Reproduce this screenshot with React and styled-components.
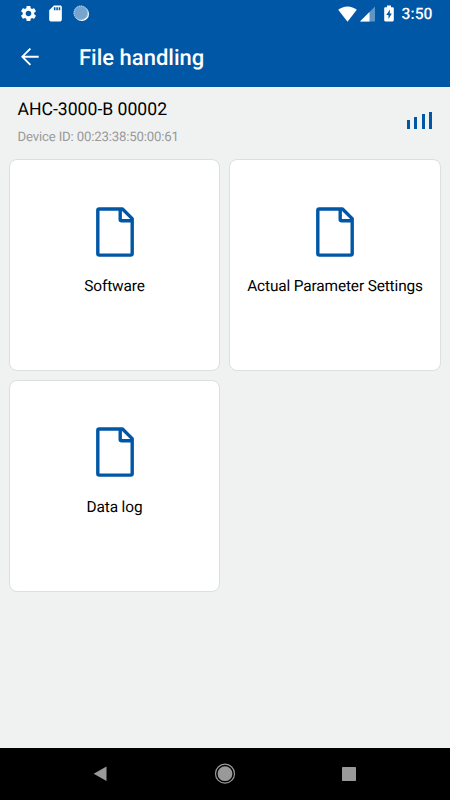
import styled, { createGlobalStyle } from "styled-components";
import { MdSettings, MdSdCard } from "react-icons/md";

const BLUE = "#0057a6";

const GlobalStyle = createGlobalStyle`
  * {
    box-sizing: border-box;
  }
  body {
    margin: 0;
    font-family: Roboto, "Liberation Sans", sans-serif;
    text-rendering: geometricPrecision;
  }
`;

const Screen = styled.div`
  width: 450px;
  height: 800px;
  display: flex;
  flex-direction: column;
  background-color: #f0f2f2;
  overflow: hidden;
`;

const StatusBar = styled.div`
  height: 27px;
  display: flex;
  justify-content: space-between;
  padding: 0 17.5px 0 19px;
  background-color: ${BLUE};
  color: white;
`;

const StatusGroup = styled.div`
  display: flex;
  align-items: center;
  gap: ${(props) => props.$gap}px;

  svg {
    display: block;
  }
`;

const Battery = styled.span`
  margin: 0 8px 0 9px;
`;

const Clock = styled.span`
  font-size: 15.7px;
  font-weight: 500;
  line-height: 28px;
`;

const AppBar = styled.header`
  height: 60px;
  display: flex;
  align-items: center;
  padding-left: 21px;
  background-color: ${BLUE};
  color: white;
`;

const BackButton = styled.button`
  display: flex;
  width: 18px;
  padding: 0;
  border: none;
  background: none;
  color: inherit;
  cursor: pointer;
`;

const Title = styled.h1`
  margin: 0 0 0 40px;
  padding-top: 4px;
  font-size: 22px;
  font-weight: 500;
  line-height: 26px;
  white-space: nowrap;
`;

const Device = styled.section`
  height: 72px;
  display: flex;
  justify-content: space-between;
  padding: 12px 18px 0 17.5px;
`;

const DeviceName = styled.div`
  font-size: 17.6px;
  line-height: 22px;
  color: #000;
`;

const DeviceId = styled.div`
  margin-top: 7.5px;
  font-size: 13.2px;
  line-height: 18px;
  letter-spacing: -0.17px;
  color: #999;
`;

const Signal = styled.div`
  height: 18px;
  display: flex;
  align-items: flex-end;
  gap: 4.4px;
  margin-top: 12px;
`;

const Bar = styled.span`
  width: 3px;
  height: ${(props) => props.$height}px;
  background-color: ${BLUE};
`;

const Grid = styled.main`
  flex: 1;
  display: grid;
  grid-template-columns: 211px 212px;
  grid-auto-rows: 212px;
  gap: 8.5px 9px;
  padding: 0.4px 9px;
`;

const Card = styled.div`
  display: flex;
  flex-direction: column;
  align-items: center;
  padding-top: 46.5px;
  border: 1px solid #dcdfdf;
  border-radius: 8px;
  background-color: white;

  svg {
    display: block;
  }
`;

const CardLabel = styled.span`
  margin-top: 19.5px;
  font-size: 15.4px;
  line-height: 20px;
  letter-spacing: -0.13px;
  color: #000;
  white-space: nowrap;
`;

const NavBar = styled.nav`
  height: 52px;
  display: flex;
  align-items: center;
  justify-content: space-between;
  padding: 0 94px 0 93px;
  background-color: black;
`;

const SyncIcon = () => (
  <svg width="17" height="17" viewBox="0 0 17 17">
    <circle cx="8.8" cy="8.9" r="7.2" fill="#fff" />
    <circle cx="7.8" cy="7.9" r="7.3" fill="#75a4cf" />
    <circle cx="7.8" cy="7.9" r="6.8" fill="none" stroke="#c5daed" strokeWidth="1" strokeDasharray="1 1" />
  </svg>
);

const WifiIcon = () => (
  <svg width="19" height="16" viewBox="0 0 19 16">
    <path d="M9.5 15.7 0.2 3.8C2.8 1.7 6 .4 9.5 .4s6.700 1.300 9.300 3.400z" fill="#fff" />
  </svg>
);

const CellIcon = () => (
  <svg width="15" height="16" viewBox="0 0 15 16">
    <path d="M0 15.500 15 .5v15z" fill="#5e96c8" />
    <path d="M0 15.500 9.500 6v9.500z" fill="#fff" />
  </svg>
);

const BatteryIcon = () => (
  <svg width="10" height="17" viewBox="0 0 10 17">
    <path
      d="M3 .5h4v1.700h1.700q1.100 0 1.100 1.100v12q0 1.100-1.100 1.100H1.300q-1.100 0-1.100-1.100v-12q0-1.100 1.100-1.100H3z"
      fill="#fff"
    />
    <path d="M6 4.500 2.300 10h2.200v4L7.800 8.500H5.700z" fill={BLUE} />
  </svg>
);

const BackIcon = () => (
  <svg width="18" height="18" viewBox="0 0 18 18">
    <path d="M17.700 8.700H1.500M9.400 .6 1.300 8.700l8.100 8.100" fill="none" stroke="#fff" strokeWidth="1.900" />
  </svg>
);

const FileIcon = () => (
  <svg width="38" height="50" viewBox="0 0 38 50" fill="none" stroke={BLUE} strokeWidth="3.400" strokeLinejoin="round">
    <path d="M3.200 2H26.500L36.200 11.600V46.600Q36.200 48.100 34.700 48.100H3.300Q1.800 48.100 1.800 46.600V3.500Q1.800 2 3.200 2Z" />
    <path d="M24.200 2.300V12.200Q24.200 13.700 25.700 13.700H36" />
  </svg>
);

const cards = ["Software", "Actual Parameter Settings", "Data log"];
const bars = [9, 12, 15, 17.5];

const App = () => {
  return (
    <Screen>
      <GlobalStyle />
      <StatusBar>
        <StatusGroup $gap={8}>
          <MdSettings size={19} />
          <MdSdCard size={19} />
          <SyncIcon />
        </StatusGroup>
        <StatusGroup $gap={0}>
          <StatusGroup $gap={3}>
            <WifiIcon />
            <CellIcon />
          </StatusGroup>
          <Battery>
            <BatteryIcon />
          </Battery>
          <Clock>3:50</Clock>
        </StatusGroup>
      </StatusBar>
      <AppBar>
        <BackButton aria-label="Back">
          <BackIcon />
        </BackButton>
        <Title>File handling</Title>
      </AppBar>
      <Device>
        <div>
          <DeviceName>AHC-3000-B 00002</DeviceName>
          <DeviceId>Device ID: 00:23:38:50:00:61</DeviceId>
        </div>
        <Signal>
          {bars.map((height) => (
            <Bar key={height} $height={height} />
          ))}
        </Signal>
      </Device>
      <Grid>
        {cards.map((label) => (
          <Card key={label}>
            <FileIcon />
            <CardLabel>{label}</CardLabel>
          </Card>
        ))}
      </Grid>
      <NavBar>
        <svg width="14" height="16" viewBox="0 0 14 16">
          <path d="M.7 7.700 13.500 .4v14.600z" fill="#999" />
        </svg>
        <svg width="22" height="22" viewBox="0 0 22 22">
          <circle cx="11" cy="10.700" r="9.500" fill="none" stroke="#999" strokeWidth="1.200" />
          <circle cx="11" cy="10.700" r="7.400" fill="#999" />
        </svg>
        <svg width="14" height="14" viewBox="0 0 14 14">
          <rect width="14" height="14" rx=".7" fill="#999" />
        </svg>
      </NavBar>
    </Screen>
  );
};

export default App;
